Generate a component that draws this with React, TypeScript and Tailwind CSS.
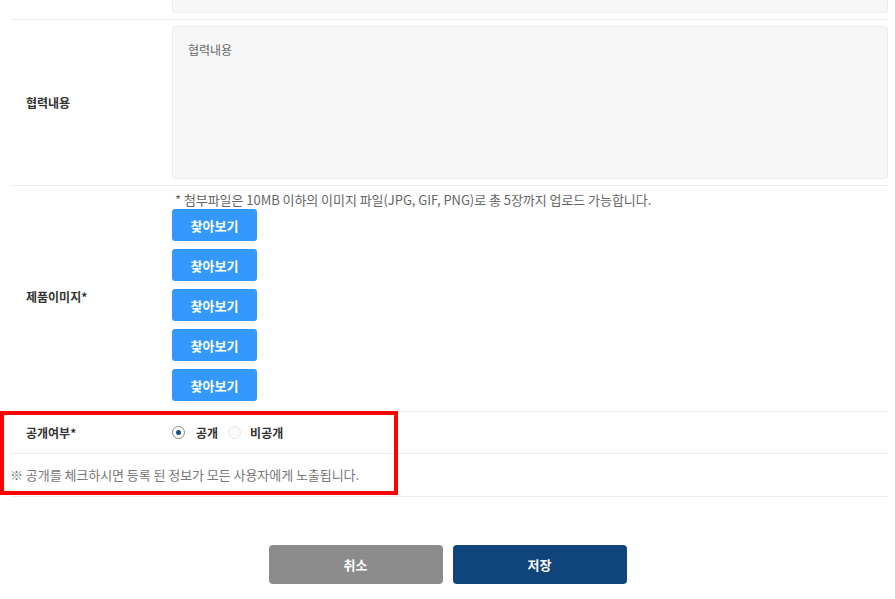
import React from "react";

const font = { fontFamily: '"Noto Sans CJK KR", "Noto Sans", sans-serif' };

function BrowseButton() {
  return (
    <button
      type="button"
      className="w-[85px] h-[32px] rounded-[3px] bg-[#3399ff] text-white text-[13px] font-bold leading-none"
    >
      찾아보기
    </button>
  );
}

function Radio({ checked }: { checked: boolean }) {
  return checked ? (
    <span className="inline-flex shrink-0 w-[13px] h-[13px] rounded-full border border-[#8a8a8a] bg-white items-center justify-center">
      <span className="block w-[5px] h-[5px] rounded-full bg-[#1c4a80]" />
    </span>
  ) : (
    <span className="inline-block shrink-0 w-[13px] h-[13px] rounded-full border border-[#e8e8e8] bg-[#fafafa]" />
  );
}

export default function App() {
  return (
    <div className="w-[895px] h-[599px] bg-white overflow-hidden text-[#333]" style={font}>
      <div className="ml-[10px] w-[878px]">
        {/* top cut row */}
        <div className="flex border-b border-[#eeeeee] pb-[6px]">
          <div className="w-[162px]" />
          <div className="flex-1 h-[13px] bg-[#f7f7f7] border border-t-0 border-[#ececec] rounded-b-[3px]" />
        </div>

        {/* 협력내용 */}
        <div className="flex items-center border-b border-[#eeeeee] py-[6px]">
          <div className="w-[162px] pl-[16px] text-[12px] font-bold">협력내용</div>
          <div className="flex-1 h-[153px] bg-[#f7f7f7] border border-[#ececec] rounded-[3px] px-[15px] py-[14px] text-[12px] text-[#666] leading-[18px]">
            협력내용
          </div>
        </div>

        {/* 제품이미지 */}
        <div className="flex items-center border-b border-[#eeeeee] pt-[4px] pb-[10px]">
          <div className="w-[162px] pl-[16px] pt-[3px] text-[12px] font-bold">제품이미지*</div>
          <div className="flex-1 flex flex-col items-start">
            <div className="pl-[3px] text-[13px] leading-[19px] tracking-[-0.05px] text-[#666]">
              * 첨부파일은 10MB 이하의 이미지 파일(JPG, GIF, PNG)로 총 5장까지 업로드 가능합니다.
            </div>
            <div className="flex flex-col gap-[8px]">
              <BrowseButton />
              <BrowseButton />
              <BrowseButton />
              <BrowseButton />
              <BrowseButton />
            </div>
          </div>
        </div>

        {/* 공개여부 + note with annotation */}
        <div className="relative">
          <div className="flex items-center border-b border-[#eeeeee] h-[42px]">
            <div className="w-[162px] pl-[16px] text-[12px] font-bold">공개여부*</div>
            <div className="flex items-center text-[12px] font-bold">
              <Radio checked />
              <span className="ml-[11px]">공개</span>
              <span className="ml-[10px] flex items-center">
                <Radio checked={false} />
              </span>
              <span className="ml-[9px]">비공개</span>
            </div>
          </div>
          <div className="flex items-center border-b border-[#eeeeee] h-[43px]">
            <div className="text-[13px] tracking-[-0.05px] text-[#777]">
              ※ 공개를 체크하시면 등록 된 정보가 모든 사용자에게 노출됩니다.
            </div>
          </div>
          <div className="absolute -left-[10px] -top-[1px] w-[398px] h-[84px] border-[4px] border-[#ff0000] pointer-events-none" />
        </div>
      </div>

      {/* actions */}
      <div className="flex justify-center gap-[10px] mt-[48px]">
        <button
          type="button"
          className="w-[174px] h-[39px] rounded-[4px] bg-[#8c8c8c] text-white text-[13px] font-bold"
        >
          취소
        </button>
        <button
          type="button"
          className="w-[174px] h-[39px] rounded-[4px] bg-[#10457b] text-white text-[13px] font-bold"
        >
          저장
        </button>
      </div>
    </div>
  );
}
